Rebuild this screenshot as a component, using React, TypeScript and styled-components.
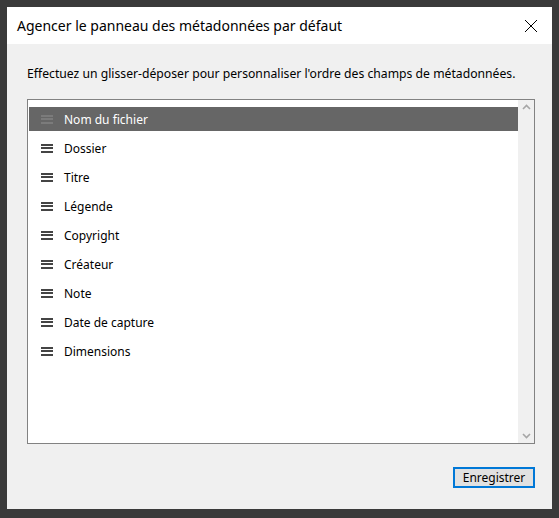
import React from "react";
import styled, { createGlobalStyle } from "styled-components";

const fields = [
  "Nom du fichier",
  "Dossier",
  "Titre",
  "Légende",
  "Copyright",
  "Créateur",
  "Note",
  "Date de capture",
  "Dimensions",
];

const GlobalStyle = createGlobalStyle`
  html, body {
    margin: 0;
    padding: 0;
    background: #3a3a3a;
  }
  body {
    font-family: "Segoe UI", "Noto Sans", "Open Sans", sans-serif;
  }
`;

const Screen = styled.div`
  width: 559px;
  height: 518px;
  padding: 7px 7px 9px 7px;
  box-sizing: border-box;
`;

const Dialog = styled.div`
  width: 545px;
  height: 502px;
  display: flex;
  flex-direction: column;
  background: #f0f0f0;
`;

const TitleBar = styled.div`
  height: 37px;
  flex: none;
  display: flex;
  align-items: center;
  justify-content: space-between;
  background: #ffffff;
  padding: 0 14px 0 10px;
`;

const Title = styled.h1`
  margin: 0;
  font-size: 14px;
  font-weight: 400;
  color: #000;
`;

const CloseButton = styled.button`
  width: 14px;
  height: 14px;
  padding: 0;
  border: 0;
  background: none;
  display: flex;
`;

const Body = styled.div`
  flex: 1;
  display: flex;
  flex-direction: column;
  padding: 22px 17px 21px 20px;
  min-height: 0;
`;

const Hint = styled.p`
  margin: 0 0 17px 0;
  font-size: 12.2px;
  line-height: 16px;
  color: #000;
  white-space: nowrap;
`;

const ListBox = styled.div`
  flex: 1;
  display: flex;
  background: #ffffff;
  border: 1px solid #828282;
  min-height: 0;
`;

const Items = styled.ul`
  flex: 1;
  margin: 0;
  padding: 7px 0 0 1px;
  list-style: none;
`;

const Row = styled.li<{ $selected?: boolean }>`
  height: 24px;
  margin-bottom: 5px;
  display: flex;
  align-items: center;
  gap: 11px;
  padding-left: 12px;
  background: ${(p) => (p.$selected ? "#666666" : "transparent")};
  color: ${(p) => (p.$selected ? "#ffffff" : "#000000")};
  font-size: 12px;
`;

const Grip = styled.span<{ $selected?: boolean }>`
  width: 12px;
  height: 9px;
  flex: none;
  display: flex;
  flex-direction: column;
  justify-content: space-between;
  span {
    height: 2px;
    background: ${(p) => (p.$selected ? "#7b7b7b" : "#444444")};
  }
`;

const ScrollTrack = styled.div`
  width: 16px;
  flex: none;
  background: #f0f0f0;
  display: flex;
  flex-direction: column;
  justify-content: space-between;
  align-items: center;
  padding: 4px 0;
`;

const Footer = styled.div`
  display: flex;
  justify-content: flex-end;
  margin-top: 23px;
`;

const SaveButton = styled.button`
  width: 82px;
  height: 21px;
  box-sizing: border-box;
  border: 2px solid #0078d7;
  background: #e1e1e1;
  font-family: inherit;
  font-size: 12px;
  color: #000;
  padding: 0;
`;

const Chevron = ({ up }: { up?: boolean }) => (
  <svg width="9" height="6" viewBox="0 0 9 6">
    <path
      d={up ? "M1 5 L4.5 1.5 L8 5" : "M1 1 L4.5 4.5 L8 1"}
      fill="none"
      stroke="#a6a6a6"
      strokeWidth="1.6"
    />
  </svg>
);

const App = () => {
  return (
    <Screen>
      <GlobalStyle />
      <Dialog>
        <TitleBar>
          <Title>Agencer le panneau des métadonnées par défaut</Title>
          <CloseButton aria-label="Fermer">
            <svg width="14" height="14" viewBox="0 0 14 14">
              <path d="M1 1 L13 13 M13 1 L1 13" stroke="#000" strokeWidth="1" />
            </svg>
          </CloseButton>
        </TitleBar>
        <Body>
          <Hint>
            Effectuez un glisser-déposer pour personnaliser l'ordre des champs de métadonnées.
          </Hint>
          <ListBox>
            <Items>
              {fields.map((f, i) => (
                <Row key={f} $selected={i === 0}>
                  <Grip $selected={i === 0}>
                    <span />
                    <span />
                    <span />
                  </Grip>
                  {f}
                </Row>
              ))}
            </Items>
            <ScrollTrack>
              <Chevron up />
              <Chevron />
            </ScrollTrack>
          </ListBox>
          <Footer>
            <SaveButton>Enregistrer</SaveButton>
          </Footer>
        </Body>
      </Dialog>
    </Screen>
  );
};

export default App;
